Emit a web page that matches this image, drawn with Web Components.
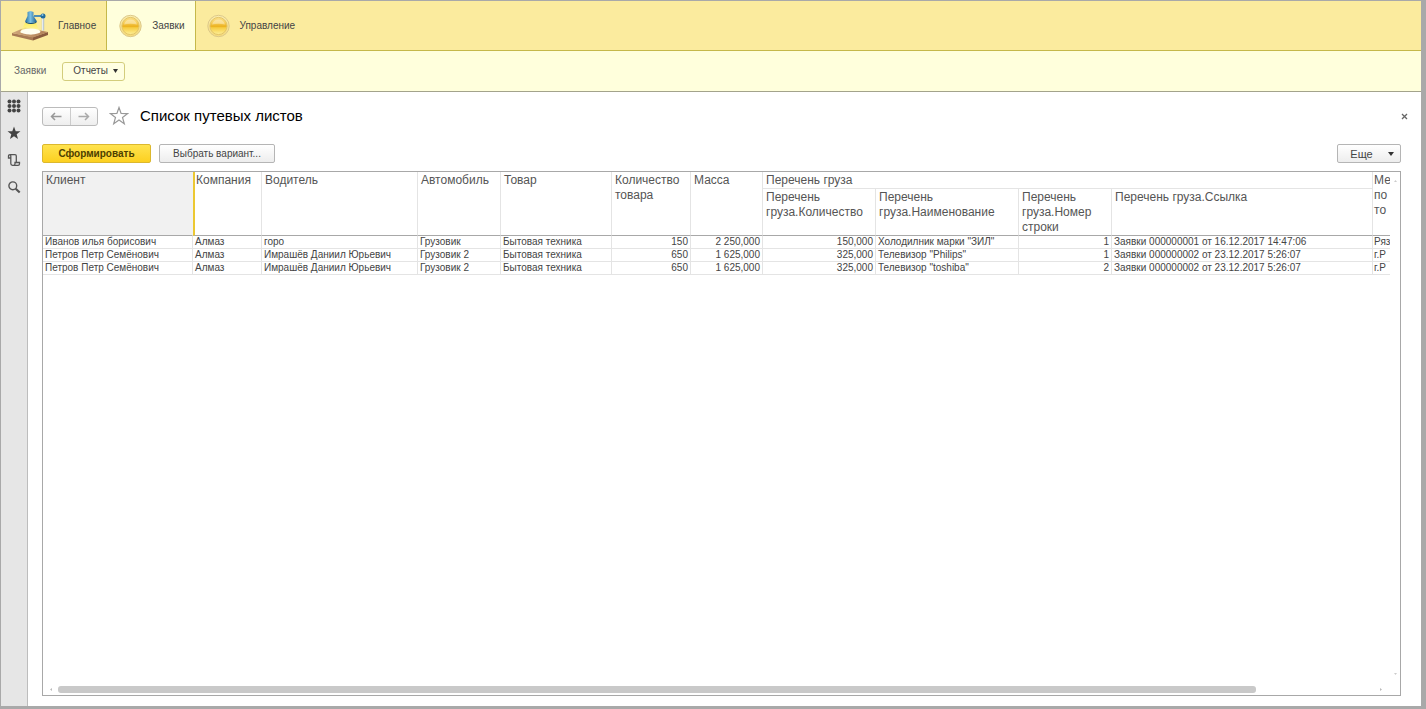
<!DOCTYPE html>
<html lang="ru">
<head>
<meta charset="utf-8">
<title>Список путевых листов</title>
<style>
  html, body { margin: 0; }
  body { font: 10px/12px "Liberation Sans", Arial, sans-serif; color: #444; background: #a9a9a9; }
</style>
</head>
<body>
<app-window>
  <section-bar slot="sections">
    <section-tab icon="lamp">Главное</section-tab>
    <section-tab icon="ball" active>Заявки</section-tab>
    <section-tab icon="ball">Управление</section-tab>
  </section-bar>
  <command-bar slot="commands"></command-bar>
  <tool-rail slot="rail"></tool-rail>
  <report-page>
    <span slot="title">Список путевых листов</span>
    <report-table></report-table>
  </report-page>
</app-window>

<script>
const define = (name, html, setup) => customElements.define(name, class extends HTMLElement {
  constructor() {
    super();
    const t = document.createElement('template');
    t.innerHTML = '<style>*{box-sizing:border-box}button{font:inherit;color:inherit;cursor:pointer}</style>' + html;
    this.attachShadow({ mode: 'open' }).append(t.content.cloneNode(true));
  }
  connectedCallback() { if (setup) setup(this); }
});

const LAMP = `<svg width="36" height="30" viewBox="0 0 36 30" aria-hidden="true">
  <defs>
    <linearGradient id="w" x1="0" x2="1"><stop offset="0" stop-color="#d0a67a"/><stop offset="1" stop-color="#b08058"/></linearGradient>
    <linearGradient id="b" x1="0" x2="1"><stop offset="0" stop-color="#1d679c"/><stop offset=".45" stop-color="#7cc0e2"/><stop offset="1" stop-color="#14588c"/></linearGradient>
    <linearGradient id="l" x1="0" y1="0" x2="0" y2="1"><stop offset="0" stop-color="#fff04a"/><stop offset="1" stop-color="#fffbd0"/></linearGradient>
  </defs>
  <path d="M0 22 21 26v3.500L0 24.500z" fill="#a87a55"/>
  <path d="M21 26 36 21v3L21 29.500z" fill="#8a5c3e"/>
  <path d="M0 22 13 16.500l23 4.500-15 5.500z" fill="url(#w)"/>
  <path d="M13 12h11l4 9-9 2.500-11-2z" fill="url(#l)" opacity=".75"/>
  <ellipse cx="18.500" cy="20.500" rx="10" ry="3" fill="#fffef0"/>
  <path d="M22 5h8" stroke="#4f8eb3" stroke-width="2"/>
  <path d="M31 6v13.500" stroke="#b3c1c8" stroke-width="2.400"/>
  <path d="M30.700 6v13.500" stroke="#f4f7f8" stroke-width="1"/>
  <circle cx="31" cy="5" r="2.500" fill="#226b9d"/><circle cx="30.500" cy="4" r="1" fill="#8cc5e2"/>
  <path d="M15.500 1 18.500 0l3 1v4l3.500 5.500q-6 3-12 0L15.500 5z" fill="url(#b)"/>
  <path d="M13 10.500q6 3 12 0l-1 1.500q-5 2-10 0z" fill="#104a78"/>
</svg>`;
const BALL = `<svg width="23" height="24" viewBox="0 0 23 24" aria-hidden="true">
  <defs>
    <linearGradient id="r" x1="0" y1="0" x2="0" y2="1"><stop offset="0" stop-color="#fbeeb0"/><stop offset="1" stop-color="#f5dc7c"/></linearGradient>
    <linearGradient id="u" x1="0" y1="0" x2="0" y2="1"><stop offset="0" stop-color="#fbe08a"/><stop offset=".3" stop-color="#f7cf5c"/><stop offset=".52" stop-color="#ebb11f"/><stop offset=".6" stop-color="#f6cc42"/><stop offset="1" stop-color="#fdf09a"/></linearGradient>
  </defs>
  <circle cx="11.500" cy="12" r="10.700" fill="url(#r)" stroke="#dcc88a"/>
  <circle cx="11.500" cy="12" r="8.600" fill="url(#u)" stroke="#e3c468"/>
  <path d="M5 10.500q1.500-5 6.500-5t6.500 5q-6.500-1.500-13 0z" fill="#fff" opacity=".35"/>
</svg>`;

define('app-window', `<style>
  :host { display: flex; flex-direction: column; min-height: 100vh; box-sizing: border-box;
    border: solid #a9a9a9; border-width: 1px 5px 3px 1px; background: #fff; }
  .main { flex: 1; display: flex; }
  main { flex: 1; display: flex; min-width: 0; }
</style>
<slot name="sections"></slot><slot name="commands"></slot>
<div class="main"><slot name="rail"></slot><main><slot></slot></main></div>`);

define('section-bar', `<style>
  :host { display: block; background: #fbeb9e; border-bottom: 1px solid #c5b84a; }
  nav { display: flex; height: 49px; }
</style><nav aria-label="Разделы"><slot></slot></nav>`);

define('section-tab', `<style>
  :host { display: flex; }
  button { display: flex; align-items: center; gap: 10px; padding: 0 10px 0 11px; border: 0; background: none; }
  :host([active]) button { background: #ffffdc; border: solid #c5b84a; border-width: 0 1px; padding: 0 10px 0 12px; }
  svg { display: block; }
</style><button type="button"><span id="i"></span><slot></slot></button>`,
  el => el.shadowRoot.getElementById('i').innerHTML = el.getAttribute('icon') === 'lamp' ? LAMP : BALL);

define('command-bar', `<style>
  :host { display: flex; align-items: center; gap: 16px; height: 41px; padding-left: 13px; box-sizing: border-box;
    background: #ffffdc; border-bottom: 1px solid #a3a38c; }
  a { color: #666; text-decoration: none; }
  button { display: flex; align-items: center; gap: 5px; height: 19px; padding: 0 6px 0 10px; border: 1px solid #d3cd7c; border-radius: 3px; background: #ffffe2; }
</style>
<a href="#orders">Заявки</a>
<button type="button">Отчеты <svg width="5" height="4" aria-hidden="true"><path d="M0 0h5L2.500 4z" fill="#333"/></svg></button>`);

define('tool-rail', `<style>
  :host { display: flex; flex-direction: column; width: 27px; box-sizing: border-box; background: #e6e6e6; border-right: 1px solid #bdbdbd; }
  button { display: grid; place-items: center; width: 26px; height: 27px; padding: 0; border: 0; background: none; }
  svg { display: block; }
</style>
<button type="button" aria-label="Меню"><svg width="14" height="14" fill="#444"><circle cx="2.500" cy="2.500" r="2"/><circle cx="7" cy="2.500" r="2"/><circle cx="11.500" cy="2.500" r="2"/><circle cx="2.500" cy="7" r="2"/><circle cx="7" cy="7" r="2"/><circle cx="11.500" cy="7" r="2"/><circle cx="2.500" cy="11.500" r="2"/><circle cx="7" cy="11.500" r="2"/><circle cx="11.500" cy="11.500" r="2"/></svg></button>
<button type="button" aria-label="Избранное"><svg width="14" height="14"><path d="M7 .5 8.700 5.200 13.500 5.300 9.700 8.200 11 13 7 10.200 3 13 4.300 8.200 .5 5.300 5.300 5.200z" fill="#444"/></svg></button>
<button type="button" aria-label="История"><svg width="14" height="14" fill="none" stroke="#555" stroke-width="1.300"><path d="M3.800 5H1.500V3.200Q1.500 1.700 3 1.700H8Q9.300 1.700 9.300 3V9.200M3 1.700Q3.800 2 3.800 3V10.500Q3.800 12.300 5.500 12.300H11Q12.500 12.300 12.500 10.700V9.500H8V10.800Q8 12.300 6.500 12.300"/></svg></button>
<button type="button" aria-label="Поиск"><svg width="14" height="14" fill="none" stroke="#555"><circle cx="5.800" cy="5.800" r="3.900" stroke-width="1.400"/><path d="M8.700 8.700 12.700 12.500" stroke-width="2.200"/></svg></button>`);

define('report-page', `<style>
  :host { flex: 1; display: flex; flex-direction: column; min-width: 0; padding: 14px 20px 10px 14px; }
  header { display: flex; align-items: center; height: 20px; }
  .nav { display: flex; width: 56px; height: 19px; border: 1px solid #bbb; border-radius: 3px; background: linear-gradient(#fff, #eee); }
  .nav button { flex: 1; display: grid; place-items: center; padding: 0; border: 0; background: none; }
  .nav button + button { border-left: 1px solid #ccc; }
  .star { display: grid; margin: 0 11px; padding: 0; border: 0; background: none; }
  h1 { margin: 0; font: 15px/20px "Liberation Sans", Arial, sans-serif; color: #000; }
  .close { display: grid; margin-left: auto; padding: 6px; border: 0; background: none; margin-right: -13px; }
  .bar { display: flex; gap: 8px; margin: 18px 0 8px; }
  .bar button { display: flex; align-items: center; justify-content: center; height: 19px; padding: 0; border: 1px solid #b5b5b5; border-radius: 2px; background: linear-gradient(#fff, #ededed); }
  .bar .run { width: 109px; font-weight: bold; color: #4d4000; border-color: #dcb82e; background: linear-gradient(#ffe34f, #fcd020); }
  .pick { width: 116px; }
  .bar .more { width: 64px; gap: 15px; margin-left: auto; padding-left: 6px; font-size: 11px; }
</style>
<header>
  <div class="nav">
    <button type="button" aria-label="Назад"><svg width="12" height="9" fill="none" stroke="#999" stroke-width="1.500"><path d="M11.500 4.500H1.500M5 1 1.500 4.500 5 8"/></svg></button>
    <button type="button" aria-label="Вперед"><svg width="12" height="9" fill="none" stroke="#aaa" stroke-width="1.500"><path d="M.5 4.500H10.500M7 1 10.500 4.500 7 8"/></svg></button>
  </div>
  <button class="star" type="button" aria-label="В избранное"><svg width="20" height="20"><path d="M10 1.500 12.100 7.500 18.500 7.600 13.500 11.500 15.300 17.700 10 14.100 4.700 17.700 6.500 11.500 1.500 7.600 7.900 7.500z" fill="#fff" stroke="#999" stroke-width="1.200"/></svg></button>
  <h1><slot name="title"></slot></h1>
  <button class="close" type="button" aria-label="Закрыть"><svg width="7" height="7"><path d="M1 1 6 6M6 1 1 6" stroke="#666" stroke-width="1.300"/></svg></button>
</header>
<div class="bar">
  <button class="run" type="button">Сформировать</button>
  <button class="pick" type="button">Выбрать вариант...</button>
  <button class="more" type="button">Еще <svg width="6" height="4" aria-hidden="true"><path d="M0 0h6L3 4z" fill="#333"/></svg></button>
</div>
<slot></slot>`);

const heads = ['Клиент', 'Компания', 'Водитель', 'Автомобиль', 'Товар', 'Количество товара', 'Масса'];
const subs = ['Перечень груза.Количество', 'Перечень груза.Наименование', 'Перечень груза.Номер строки', 'Перечень груза.Ссылка'];
const rows = [
  ['Иванов илья борисович', 'Алмаз', 'горо', 'Грузовик', 'Бытовая техника', '150', '2 250,000', '150,000', 'Холодилник марки "ЗИЛ"', '1', 'Заявки 000000001 от 16.12.2017 14:47:06', 'Ряз'],
  ['Петров Петр Семёнович', 'Алмаз', 'Имрашёв Даниил Юрьевич', 'Грузовик 2', 'Бытовая техника', '650', '1 625,000', '325,000', 'Телевизор "Philips"', '1', 'Заявки 000000002 от 23.12.2017 5:26:07', 'г.Р'],
  ['Петров Петр Семёнович', 'Алмаз', 'Имрашёв Даниил Юрьевич', 'Грузовик 2', 'Бытовая техника', '650', '1 625,000', '325,000', 'Телевизор "toshiba"', '2', 'Заявки 000000002 от 23.12.2017 5:26:07', 'г.Р'],
];
const numeric = new Set([5, 6, 7, 9]);
const widths = [150, 69, 156, 83, 111, 79, 72, 113, 143, 93, 261, 100];

define('report-table', `<style>
  :host { flex: 1; display: grid; grid-template: 1fr 12px / minmax(0, 1fr) 10px; min-width: 0; box-sizing: border-box; border: 1px solid #a8a8a8; background: #fff; }
  .view { overflow: hidden; }
  table { width: 1430px; table-layout: fixed; border-collapse: separate; border-spacing: 0; }
  th, td { border: solid #e4e4e4; border-width: 0 1px 1px 0; text-align: left; vertical-align: top; }
  th { padding: 1px 0 0 3px; font-weight: normal; font-size: 12px; line-height: 15px; color: #555; }
  th[rowspan], .sub th { border-bottom-color: #a8a8a8; }
  th:first-child[rowspan] { background: #f1f1f1; border-right-color: #f1f1f1; }
  th.mark { border-left: 2px solid #ecc832; padding-left: 1px; }
  th:last-child[rowspan] { padding-left: 1px; }
  .sub th:last-child { padding-left: 3px; }
  td { padding: 0 2px; line-height: 12px; white-space: nowrap; color: #444; }
  td:last-child { padding-left: 1px; }
  td.num { text-align: right; }
  .v { display: flex; flex-direction: column; justify-content: space-between; align-items: center; padding: 8px 0; }
  .h { display: flex; align-items: center; padding: 0 8px 0 7px; }
  .track { flex: 1; margin: 0 6px; }
  .thumb { width: 91%; height: 7px; border-radius: 3px; background: #c9c9c9; }
</style>
<div class="view"><table><colgroup id="cols"></colgroup><thead id="head"></thead><tbody id="body"></tbody></table></div>
<div class="v"><svg width="3" height="2"><path d="M0 2h3L1.500 0z" fill="#ccc"/></svg><svg width="3" height="2"><path d="M0 0h3L1.500 2z" fill="#ccc"/></svg></div>
<div class="h"><svg width="2" height="3"><path d="M2 0v3L0 1.500z" fill="#bbb"/></svg><div class="track"><div class="thumb"></div></div><svg width="2" height="3"><path d="M0 0v3L2 1.500z" fill="#bbb"/></svg></div>`,
  el => {
    const $ = id => el.shadowRoot.getElementById(id);
    $('cols').innerHTML = widths.map(w => `<col style="width:${w}px">`).join('');
    $('head').innerHTML = '<tr>' + heads.map((h, i) => `<th rowspan="2" scope="col"${i === 1 ? ' class="mark"' : ''}>${h}</th>`).join('')
      + '<th colspan="4" scope="colgroup">Перечень груза</th><th rowspan="2" scope="col">Ме<br>по<br>то</th></tr>'
      + '<tr class="sub">' + subs.map(s => `<th scope="col">${s}</th>`).join('') + '</tr>';
    $('body').innerHTML = rows.map(r => '<tr>' + r.map((c, i) => `<td${numeric.has(i) ? ' class="num"' : ''}>${c}</td>`).join('') + '</tr>').join('');
  });
</script>
</body>
</html>
